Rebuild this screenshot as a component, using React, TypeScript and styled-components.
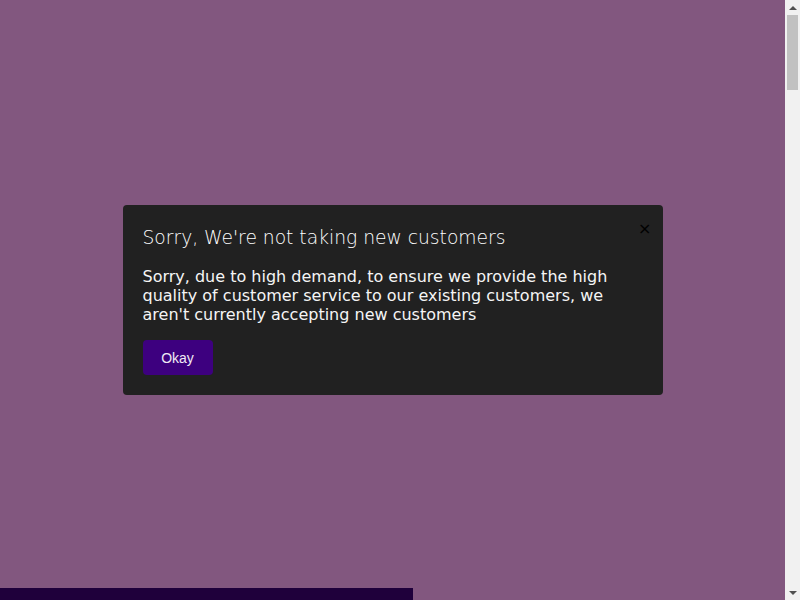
import React from "react";
import styled, { createGlobalStyle } from "styled-components";

const Global = createGlobalStyle`
  html, body { margin: 0; padding: 0; }
  html { scrollbar-width: none; }
  html::-webkit-scrollbar { display: none; }
  body { background: #82577f; font-family: "DejaVu Sans", sans-serif; }
`;

const Page = styled.div`
  min-height: 4500px;
  margin-right: 15px;
  display: flex;
  flex-direction: column;
`;

const Hero = styled.div`
  height: 588px;
`;

const DarkSection = styled.div`
  width: 413px;
  height: 3912px;
  background: #1f003b;
`;

const Scrollbar = styled.div`
  position: fixed;
  top: 0;
  right: 0;
  bottom: 0;
  width: 15px;
  background: #f1f1f1;
  display: flex;
  flex-direction: column;
`;

const ScrollArrow = styled.div`
  height: 15px;
  display: flex;
  align-items: center;
  justify-content: center;
`;

const Track = styled.div`
  flex: 1;
  padding: 0 2px;
`;

const Thumb = styled.div`
  height: 75px;
  background: #c1c1c1;
`;

const Overlay = styled.div`
  position: fixed;
  inset: 0 15px 0 0;
  display: flex;
  align-items: center;
  justify-content: center;
`;

const Modal = styled.div`
  position: relative;
  box-sizing: border-box;
  width: 540px;
  padding: 20px;
  background: #212121;
  border-radius: 4px;
  color: #ffffff;
`;

const Title = styled.h2`
  margin: 0 0 18px;
  padding-top: 1px;
  font-family: "DejaVu Sans", sans-serif;
  font-weight: 200;
  font-size: 18.7px;
  line-height: 23px;
  color: #ffffff;
`;

const Body = styled.p`
  margin: 0 0 16px;
  font-size: 16px;
  line-height: 19px;
  color: #f5f5f5;
`;

const Close = styled.button`
  position: absolute;
  top: 14px;
  right: 9px;
  border: 0;
  background: transparent;
  color: #000;
  font-family: "DejaVu Sans", sans-serif;
  font-size: 16px;
  line-height: 20px;
  padding: 0 2px;
  cursor: pointer;
`;

const Button = styled.button`
  display: block;
  width: 70px;
  height: 35px;
  border: 0;
  border-radius: 4px;
  background: #3d007f;
  color: #f0eaf5;
  font-family: "Liberation Sans", sans-serif;
  font-size: 14px;
  cursor: pointer;
`;

export default function App() {
  return (
    <>
      <Global />
      <Page>
        <Hero />
        <DarkSection />
      </Page>
      <Scrollbar>
        <ScrollArrow>
          <svg width="8" height="4" viewBox="0 0 8 4">
            <polygon points="0,4 4,0 8,4" fill="#505050" />
          </svg>
        </ScrollArrow>
        <Track>
          <Thumb />
        </Track>
        <ScrollArrow>
          <svg width="8" height="4" viewBox="0 0 8 4">
            <polygon points="0,0 4,4 8,0" fill="#505050" />
          </svg>
        </ScrollArrow>
      </Scrollbar>
      <Overlay>
        <Modal>
          <Close aria-label="close">×</Close>
          <Title>Sorry, We're not taking new customers</Title>
          <Body>
            Sorry, due to high demand, to ensure we provide the high quality of
            customer service to our existing customers, we aren't currently
            accepting new customers
          </Body>
          <Button>Okay</Button>
        </Modal>
      </Overlay>
    </>
  );
}
